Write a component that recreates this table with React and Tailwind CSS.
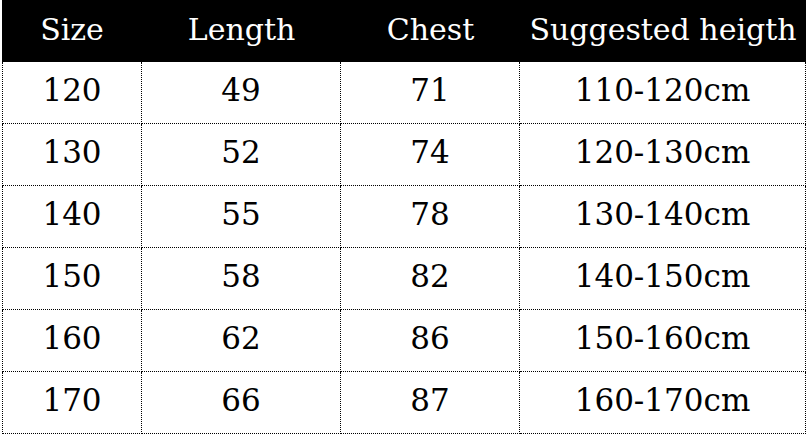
const HEAD = ['Size', 'Length', 'Chest', 'Suggested heigth'];

const ROWS = [
  ['120', '49', '71', '110-120cm'],
  ['130', '52', '74', '120-130cm'],
  ['140', '55', '78', '130-140cm'],
  ['150', '58', '82', '140-150cm'],
  ['160', '62', '86', '150-160cm'],
  ['170', '66', '87', '160-170cm'],
];

const font = { fontFamily: '"DejaVu Serif", "Liberation Serif", serif' };

export default function App() {
  return (
    <div className="w-[808px] h-[436px] bg-white pl-[2px]" style={font}>
      <div className="grid grid-cols-[140px_199px_179px_286px] w-[804px]">
        {/* header */}
        {HEAD.map((h) => (
          <div
            key={h}
            className="h-[62px] bg-black text-white text-[30px] flex items-center justify-center pb-[4px]"
          >
            {h}
          </div>
        ))}

        {/* body */}
        {ROWS.map((row, ri) =>
          row.map((c, ci) => (
            <div
              key={ri + '-' + ci}
              className={`h-[62px] border-b border-r border-dotted border-black text-black text-[31px] flex items-center justify-center pb-[4px] ${
                ci === 0 ? 'border-l' : ''
              }`}
            >
              {c}
            </div>
          ))
        )}
      </div>
    </div>
  );
}
